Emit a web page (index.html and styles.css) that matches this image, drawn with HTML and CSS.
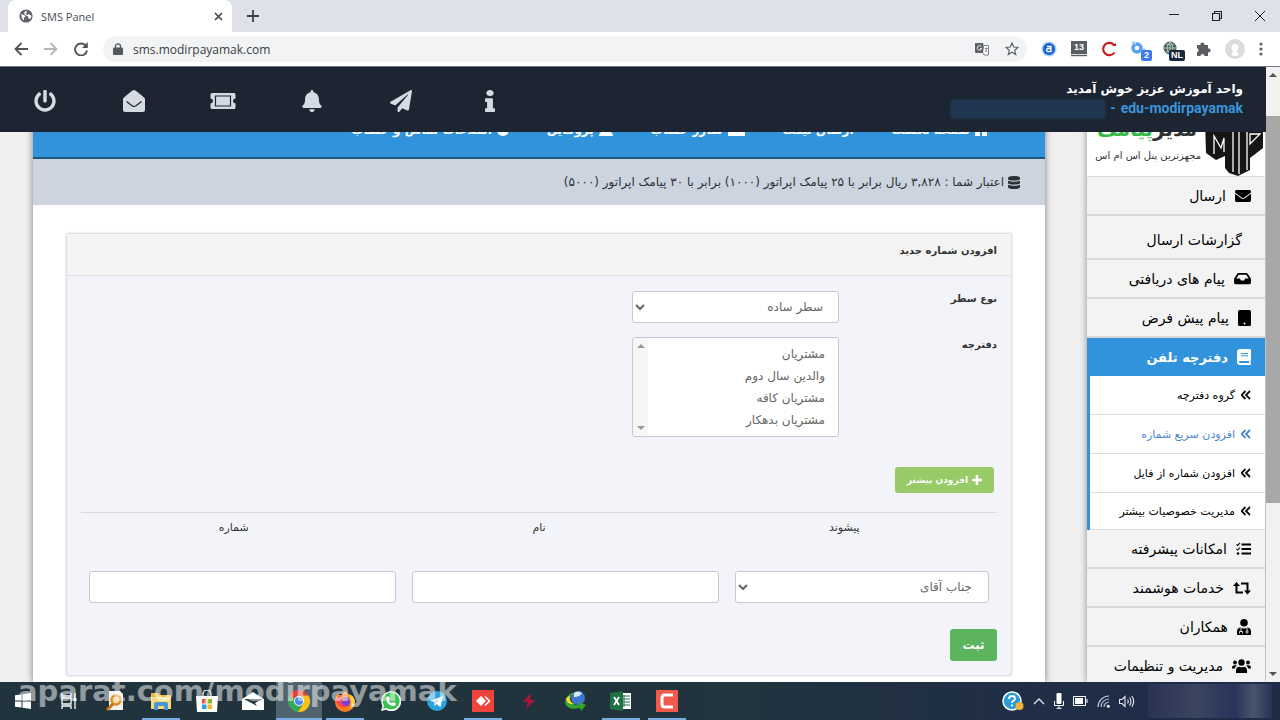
FILE: index.html
```html
<!DOCTYPE html>
<html lang="fa">
	<head>
		<meta charset="utf-8">
		<title>SMS Panel</title>
		<link rel="stylesheet" href="styles.css">
	</head>
	<body>
		<div class="tabs">
			<div class="tab">
				<svg width="14" height="14" viewBox="0 0 14 14"><circle cx="7" cy="7" r="6.6" fill="#5f6368"/><path d="M2 5l3 1 1.500 1.500L5 9v2.500L3 9.500zM7 1.500l1 2L6.500 5l2 1 1.500-1 2.500 2-1 3-2-.5-.5-2L6 6 5 4z" fill="#fff"/></svg>
				<span>SMS Panel</span>
				<button class="icon_btn" aria-label="Close tab"><svg width="9" height="9" viewBox="0 0 9 9"><path d="M1 1l7 7M8 1L1 8" stroke="#45494d" stroke-width="1.700"/></svg></button>
			</div>
			<button class="icon_btn new_tab" aria-label="New tab"><svg width="12" height="12" viewBox="0 0 12 12"><path d="M6 0v12M0 6h12" stroke="#3c4043" stroke-width="1.800"/></svg></button>
			<div class="win_btns">
				<button class="icon_btn" aria-label="Minimize"><svg width="10" height="10" viewBox="0 0 10 10"><path d="M0 3.500h10" stroke="#222"/></svg></button>
				<button class="icon_btn" aria-label="Restore"><svg width="10" height="10" viewBox="0 0 10 10"><path d="M.5 2.500h7v7h-7zM2.500 2.500v-2h7v7h-2" fill="none" stroke="#222" stroke-width="1.200"/></svg></button>
				<button class="icon_btn" aria-label="Close"><svg width="10" height="10" viewBox="0 0 10 10"><path d="M0 0l10 10M10 0L0 10" stroke="#222"/></svg></button>
			</div>
		</div>

		<div class="toolbar">
			<button class="icon_btn" aria-label="Back"><svg width="14" height="14" viewBox="0 0 14 14"><path d="M14 7H1.500M7.500 1l-6 6 6 6" fill="none" stroke="#505458" stroke-width="1.800"/></svg></button>
			<button class="icon_btn" aria-label="Forward"><svg width="14" height="14" viewBox="0 0 14 14"><path d="M0 7h12.500M6.500 1l6 6-6 6" fill="none" stroke="#b5b8bb" stroke-width="1.800"/></svg></button>
			<button class="icon_btn" aria-label="Reload"><svg width="14" height="14" viewBox="0 0 14 14"><path d="M12 4A6 6 0 1 0 13 8.500" fill="none" stroke="#505458" stroke-width="1.900"/><path d="M13.800 0v6H8z" fill="#505458"/></svg></button>
			<div class="omnibox">
				<svg width="10" height="12" viewBox="0 0 10 12"><path d="M1 4.500h8a1 1 0 0 1 1 1V11a1 1 0 0 1-1 1H1a1 1 0 0 1-1-1V5.500a1 1 0 0 1 1-1z" fill="#54585c"/><path d="M2.500 5V3a2.500 2.200 0 0 1 5 0v2" fill="none" stroke="#54585c" stroke-width="1.300"/></svg>
				<input type="text" aria-label="Address" value="sms.modirpayamak.com">
				<svg width="14" height="14" viewBox="0 0 14 14"><path d="M0 1h8l2.500 10H1a1 1 0 0 1-1-1z" fill="#5f6368"/><path d="M9 3.500h4.500V13H9L8 11" fill="#fff" stroke="#777" stroke-width=".9"/><path d="M6.300 4.500a2.200 2.200 0 1 0 .4 2H5" fill="none" stroke="#eee" stroke-width="1"/><path d="M9.800 6.500H13M11.500 5.500v1c0 2-1 3-1.500 3M10.500 8l2 2.500" fill="none" stroke="#777" stroke-width=".8"/></svg>
				<svg width="14" height="14" viewBox="0 0 14 14"><path d="M7 1l1.700 4 4.300.4-3.300 2.900 1 4.200L7 10.300l-3.700 2.200 1-4.200L1 5.400 5.300 5z" fill="none" stroke="#5f6368" stroke-width="1.200"/></svg>
			</div>
			<div class="exts">
				<svg width="16" height="16" viewBox="0 0 16 16"><circle cx="8" cy="8" r="7.500" fill="#a9cdf6"/><circle cx="8" cy="8" r="6" fill="#1763d2"/><path d="M6 5.500h4v5H7a1.500 1.500 0 0 1 0-3h3" fill="none" stroke="#fff" stroke-width="1.300"/></svg>
				<span class="cal">13</span>
				<svg width="16" height="16" viewBox="0 0 16 16"><path d="M13.500 4.500A6.200 6.200 0 1 0 13.500 11.500" fill="none" stroke="#c32222" stroke-width="2.200"/><path d="M11 5h4V2z" fill="#c32222"/></svg>
				<span class="ext"><svg width="18" height="16" viewBox="0 0 18 16"><circle cx="6" cy="7" r="4" fill="none" stroke="#58a0ec" stroke-width="3.500"/><path d="M1 1l4 2M11 8l4 1" stroke="#9ac8f5" stroke-width="2"/></svg><b class="badge">2</b></span>
				<span class="ext"><svg width="18" height="16" viewBox="0 0 18 16"><circle cx="7" cy="7" r="6.500" fill="#4c5e60"/><path d="M1 7h12M7 1v12M3 3q4 2 8 0M3 11q4-2 8 0M7 1Q1 7 7 13M7 1q6 6 0 12" fill="none" stroke="#a9c4a9"/></svg><b class="badge badge_nl">NL</b></span>
				<svg width="16" height="16" viewBox="0 0 16 16"><path d="M2 4h3.500a2 2 0 1 1 3.800 0H13v3.500a2 2 0 1 1 0 3.800V15H9.500a2 2 0 0 0-4 0H2v-3.800a2 2 0 0 0 0-3.900z" fill="#5a5e62"/></svg>
				<svg width="20" height="20" viewBox="0 0 20 20"><circle cx="10" cy="10" r="10" fill="#dcdcdc"/><path d="M6 15.500c1-2 2-1.500 2-3C6 10 6 5 10 5s4 5 2 7.500c0 1.500 1 1 2 3q-4 3-8 0z" fill="#fff"/></svg>
				<svg width="4" height="14" viewBox="0 0 4 14" fill="#5f6368"><circle cx="2" cy="2" r="1.600"/><circle cx="2" cy="7" r="1.600"/><circle cx="2" cy="12" r="1.600"/></svg>
			</div>
		</div>

		<div class="page">
			<div class="site" dir="rtl">
				<div class="header">
					<div class="welcome">
						<div>واحد آموزش عزیز خوش آمدید</div>
						<div class="user"><a href="#">edu-modirpayamak</a><span>-</span><i class="hidden_name"></i></div>
					</div>
					<div class="head_icons" dir="ltr">
						<a href="#" aria-label="خروج"><svg width="22" height="22" viewBox="0 0 512 512"><path d="M400 54.100c63 45 104 118.600 104 201.900 0 136.800-110.800 247.700-247.500 248C120 504.300 8.200 393 8 256.400 7.900 173.100 48.900 99.300 111.800 54.200c11.700-8.300 28-4.800 35 7.700L162.600 90c5.900 10.500 3.100 23.800-6.600 31-41.500 30.800-68 79.600-68 134.900-.1 92.300 74.500 168.100 168 168.100 91.600 0 168.600-74.200 168-169.100-.3-51.800-24.700-101.800-68.100-134-9.700-7.200-12.400-20.500-6.500-30.900l15.800-28.100c7-12.400 23.200-16.100 34.800-7.800zM296 264V24c0-13.300-10.700-24-24-24h-32c-13.300 0-24 10.700-24 24v240c0 13.300 10.700 24 24 24h32c13.300 0 24-10.700 24-24z"/></svg></a>
						<a href="#" aria-label="پیام ها"><svg width="24" height="22" viewBox="0 0 24 22"><path d="M1 8.500Q10 0 12 0t11 8.500V20a2 2 0 0 1-2 2H3a2 2 0 0 1-2-2z"/><path d="M4.500 11.500l5.500 4.300q2 1.300 4 0l5.500-4.300" fill="none" stroke="#1c2531" stroke-width="1.200"/></svg></a>
						<a href="#" aria-label="تیکت"><svg width="26" height="18" viewBox="0 0 26 18"><path d="M2 1h22a1.500 1.500 0 0 1 1.500 1.500V6.500a2.500 2.500 0 0 0 0 5V15.500A1.500 1.500 0 0 1 24 17H2a1.500 1.500 0 0 1-1.500-1.500V11.500a2.500 2.500 0 0 0 0-5V2.500A1.500 1.500 0 0 1 2 1z"/><path d="M5.500 4h15v10h-15z" fill="none" stroke="#1c2531" stroke-width="1.200"/></svg></a>
						<a href="#" aria-label="اعلان ها"><svg width="20" height="22" viewBox="0 0 448 512"><path d="M224 512c35.320 0 63.970-28.650 63.970-64H160.030c0 35.350 28.650 64 63.970 64zm215.390-149.710c-19.320-20.760-55.470-51.990-55.470-154.290 0-77.700-54.480-139.900-127.940-155.160V32c0-17.670-14.320-32-31.980-32s-31.980 14.330-31.980 32v20.840C118.560 68.100 64.080 130.300 64.080 208c0 102.300-36.150 133.530-55.470 154.290-6 6.450-8.660 14.160-8.610 21.710.11 16.400 12.980 32 32.100 32h383.800c19.120 0 32-15.600 32.100-32 .05-7.550-2.610-15.270-8.610-21.710z"/></svg></a>
						<a href="#" aria-label="ارسال"><svg width="22" height="22" viewBox="0 0 512 512"><path d="M476 3.200L12.500 270.600c-18.100 10.400-15.800 35.600 2.200 43.200L121 358.400l287.300-253.200c5.500-4.900 13.300 2.600 8.600 8.300L176 407v80.500c0 23.600 28.500 32.900 42.500 15.800L282 426l124.600 52.200c14.200 6 30.400-2.900 33-18.200l72-432C515 7.800 493.300-6.800 476 3.200z"/></svg></a>
						<a href="#" aria-label="راهنما"><svg width="10" height="22" viewBox="0 0 192 512" preserveAspectRatio="none"><path d="M20 424.229h20V279.771H20c-11.046 0-20-8.954-20-20V212c0-11.046 8.954-20 20-20h112c11.046 0 20 8.954 20 20v212.229h20c11.046 0 20 8.954 20 20V492c0 11.046-8.954 20-20 20H20c-11.046 0-20-8.954-20-20v-47.771c0-11.046 8.954-20 20-20zM96 0C56.235 0 24 32.235 24 72s32.235 72 72 72 72-32.235 72-72S135.764 0 96 0z"/></svg></a>
					</div>
				</div>

				<div class="content">
					<div class="side">
						<div class="logo">
							<svg width="58" height="78" viewBox="0 0 58 78"><path d="M0 22l28-18 30 18v28L45 60v12l-12 6-9-3-4-5V58l-9 4-10-7z" fill="#161414"/><path d="M28 30v44M34 30v46M42 30v42M45 36l0 10 10-10zM9 56V38l7 12 3-10v14" fill="none" stroke="#fff" stroke-width="1.300"/></svg>
							<div class="logo_text">
								<div class="logo_name">مدیر<span>پیامک</span></div>
								<div>مجهزترین پنل اس ام اس</div>
							</div>
						</div>
						<a class="item" href="#"><svg width="16" height="16" viewBox="0 0 512 512"><path d="M502.300 190.800c3.900-3.100 9.700-.2 9.700 4.700V400c0 26.500-21.500 48-48 48H48c-26.500 0-48-21.500-48-48V195.600c0-5 5.700-7.800 9.700-4.700 22.400 17.400 52.100 39.500 154.100 113.600 21.100 15.400 56.700 47.800 92.200 47.600 35.700.3 72-32.800 92.300-47.600 102-74.100 131.600-96.300 154-113.700zM256 320c23.200.4 56.600-29.200 73.400-41.400 132.700-96.300 142.800-104.700 173.400-128.700 5.800-4.500 9.200-11.500 9.200-18.900v-19c0-26.500-21.500-48-48-48H48c-26.500 0-48 21.500-48 48v19c0 7.400 3.400 14.300 9.200 18.900 30.600 23.900 40.700 32.400 173.400 128.700 16.800 12.200 50.200 41.800 73.400 41.400z"/></svg>ارسال</a>
						<a class="item item_plain" href="#">گزارشات ارسال</a>
						<a class="item" href="#"><svg width="17" height="15" viewBox="0 0 576 512"><path d="M567.938 243.908L462.250 85.374A48.003 48.003 0 0 0 422.311 64H153.689a48 48 0 0 0-39.938 21.374L8.062 243.908A47.994 47.994 0 0 0 0 270.533V400c0 26.510 21.490 48 48 48h480c26.510 0 48-21.490 48-48V270.533a47.994 47.994 0 0 0-8.062-26.625zM162.252 128h251.497l85.333 128H376l-32 64H232l-32-64H76.918l85.334-128z"/></svg>پیام های دریافتی</a>
						<a class="item" href="#"><svg width="13" height="16" viewBox="0 0 13 16"><path fill-rule="evenodd" d="M1.500 0h10A1.500 1.500 0 0 1 13 1.500v13a1.500 1.500 0 0 1-1.500 1.500h-10A1.500 1.500 0 0 1 0 14.500v-13A1.500 1.500 0 0 1 1.500 0zM6.500 12.500a1 1 0 1 0 0 2 1 1 0 0 0 0-2z"/></svg>پیام پیش فرض</a>
						<a class="item item_active" href="#"><svg width="14" height="16" viewBox="0 0 14 16"><path fill-rule="evenodd" d="M3 0h10.200a.8.8 0 0 1 .8.8v10.400a.8.800 0 0 1-.4.700v2.200a.8.8 0 0 1 .4.700v.4a.8.8 0 0 1-.8.800H3a3 3 0 0 1-3-3V3a3 3 0 0 1 3-3zM3 12a1 1 0 0 0 0 2h9v-2zM4 4v1h7V4zm0 2.200v1h7v-1z"/></svg>دفترچه تلفن</a>
						<div class="sub">
							<a href="#"><svg width="10" height="10" viewBox="0 0 10 10"><path d="M4.500 1l-4 4 4 4M9 1L5 5l4 4"/></svg>گروه دفترچه</a>
							<a href="#" class="on"><svg width="10" height="10" viewBox="0 0 10 10"><path d="M4.500 1l-4 4 4 4M9 1L5 5l4 4"/></svg>افزودن سریع شماره</a>
							<a href="#"><svg width="10" height="10" viewBox="0 0 10 10"><path d="M4.500 1l-4 4 4 4M9 1L5 5l4 4"/></svg>افزودن شماره از فایل</a>
							<a href="#"><svg width="10" height="10" viewBox="0 0 10 10"><path d="M4.500 1l-4 4 4 4M9 1L5 5l4 4"/></svg>مدیریت خصوصیات بیشتر</a>
						</div>
						<a class="item" href="#"><svg width="15" height="14" viewBox="0 0 15 14"><path d="M5.500 2.500H15M5.500 7H15M5.500 11.500H15" fill="none" stroke="#000" stroke-width="1.900"/><path d="M.5 2.300l1.200 1.200L4 .8M.5 6.800L1.700 8 4 5.500" fill="none" stroke="#000" stroke-width="1.100"/><circle cx="2" cy="11.500" r="1.300"/></svg>امکانات پیشرفته</a>
						<a class="item" href="#"><svg width="18" height="14" viewBox="0 0 18 14"><path d="M3.500 3v8.500H10M8 2.500h6.500V11" fill="none" stroke="#000" stroke-width="2"/><path d="M0 5l3.500-4L7 5zM11 9.500h7L14.500 13.500z"/></svg>خدمات هوشمند</a>
						<a class="item" href="#"><svg width="14" height="16" viewBox="0 0 14 16"><circle cx="7" cy="3.800" r="3.800"/><path d="M3.500 8.500Q7 10.500 10.500 8.500 14 9 14 12.500V15a1 1 0 0 1-1 1H1a1 1 0 0 1-1-1v-2.500Q0 9 3.500 8.500z"/><path d="M4 9v4M2.500 14.500v-2h3v2M10 9v3" fill="none" stroke="#f3f3f3" stroke-width=".9"/><circle cx="10" cy="13" r="1.100" fill="none" stroke="#f3f3f3" stroke-width=".9"/></svg>همکاران</a>
						<a class="item" href="#"><svg width="19" height="14" viewBox="0 0 19 14"><circle cx="9.500" cy="3.500" r="3.200"/><circle cx="3" cy="3.500" r="1.900"/><circle cx="16" cy="3.500" r="1.900"/><path d="M4 14v-2.500q0-3.500 3.500-3.800 2 1 4 0Q15 8 15 11.500V14zM0 9q0-2.800 2.500-2.800H5Q3 7.500 3 9.500H0zM19 9q0-2.800-2.500-2.800H14q2 1.300 2 3.300h3z"/></svg>مدیریت و تنظیمات</a>
					</div>

					<div class="main">
						<div class="nav">
							<a href="#"><svg width="12" height="12" viewBox="0 0 12 12"><path d="M0 0h5v5H0zM7 0h5v5H7zM0 7h5v5H0zM7 7h5v5H7z"/></svg>صفحه نخست</a>
							<a href="#">ارسال تیکت</a>
							<a href="#"><svg width="17" height="12" viewBox="0 0 17 12"><path d="M0 1h17v3H0zM0 6h17v6H0z"/></svg>شارژ حساب</a>
							<a href="#"><svg width="14" height="12" viewBox="0 0 14 12"><circle cx="7" cy="3" r="3"/><path d="M0 12q0-5 7-5t7 5z"/></svg>پروفایل</a>
							<a href="#"><svg width="12" height="12" viewBox="0 0 12 12"><circle cx="6" cy="6" r="6"/></svg>اطلاعات تماس و حساب</a>
						</div>
						<div class="credit"><svg width="12" height="13" viewBox="0 0 12 13"><path d="M0 2q0-2 6-2t6 2v1q0 1.500-6 1.500T0 3zM0 4.700q2 1 6 1t6-1V7q0 1.500-6 1.500T0 7zM0 8.800q2 1 6 1t6-1V11q0 2-6 2t-6-2z"/></svg>اعتبار شما : ۳,۸۲۸ ریال برابر با ۲۵ پیامک اپراتور (۱۰۰۰) برابر با ۳۰ پیامک اپراتور (۵۰۰۰)</div>

						<form class="panel">
							<div class="panel_head">افزودن شماره جدید</div>
							<div class="panel_body">
								<div class="row">
									<label for="row_type">نوع سطر</label>
									<select class="field" id="row_type" name="row_type"><option>سطر ساده</option></select>
								</div>
								<div class="row">
									<label for="book">دفترچه</label>
									<div class="field list">
										<select id="book" name="book" multiple size="4">
											<option>مشتریان</option>
											<option>والدین سال دوم</option>
											<option>مشتریان کافه</option>
											<option>مشتریان بدهکار</option>
										</select>
										<div class="list_bar"><i class="up"></i><i class="down"></i></div>
									</div>
								</div>
								<button type="button" class="more"><svg width="10" height="10" viewBox="0 0 10 10"><path d="M5 0v10M0 5h10" stroke="#fff" stroke-width="2.600"/></svg>افزودن بیشتر</button>
								<div class="titles">
									<label for="prefix">پیشوند</label>
									<label for="name">نام</label>
									<label for="number">شماره</label>
								</div>
								<div class="inputs">
									<select class="field" id="prefix" name="prefix"><option>جناب آقای</option></select>
									<input class="field" type="text" id="name" name="name">
									<input class="field" type="text" id="number" name="number">
								</div>
								<button type="button" class="save">ثبت</button>
							</div>
						</form>
					</div>
				</div>
			</div>
			<div class="scroll"><i class="up"></i><div class="track"><div class="thumb"></div></div><i class="down"></i></div>
		</div>

		<div class="taskbar">
			<div class="app"><svg width="16" height="16" viewBox="0 0 16 16"><path d="M0 2.300L6.500 1.400v6.100H0zM7.500 1.200L16 0v7.500H7.500zM0 8.500h6.500v6.100L0 13.700zM7.500 8.500H16V16l-8.500-1.200z" fill="#fff"/></svg></div>
			<div class="app"><svg width="18" height="16" viewBox="0 0 18 16"><path d="M2 0v3h9V0M2 16v-3h9v3M2 5h9v6H2zM15 0v16" fill="none" stroke="#fff" stroke-width="1.300"/><path d="M13.500 5h3v3h-3z" fill="#fff"/></svg></div>
			<div class="app"><svg width="20" height="22" viewBox="0 0 20 22"><path d="M4 1h11l3 3v16H4z" fill="#f3f1ee"/><circle cx="11" cy="10" r="4.500" fill="#fbe0a8" stroke="#e08a1e" stroke-width="2.500"/><path d="M8 14l-6 6" stroke="#c77413" stroke-width="3"/></svg></div>
			<div class="app open"><svg width="22" height="20" viewBox="0 0 22 20"><path d="M1 2h7l2 2h11v14H1z" fill="#e9b83d"/><path d="M1 6h20v12H1z" fill="#fadb7c"/><path d="M4 19v-6q0-2 2-2h10q2 0 2 2v6h-4v-4H8v4z" fill="#4a95d4"/></svg></div>
			<div class="app"><svg width="22" height="22" viewBox="0 0 22 22"><path d="M7 6V4a4 4 0 0 1 8 0v2" fill="none" stroke="#ddd" stroke-width="1.500"/><path d="M0 6h22l-1 16H1z" fill="#fff"/><path d="M6 9h4.500v4.500H6z" fill="#e8502e"/><path d="M11.500 9H16v4.500h-4.500z" fill="#7fb92c"/><path d="M6 14.500h4.500V19H6z" fill="#2aa0e6"/><path d="M11.500 14.500H16V19h-4.500z" fill="#f5b921"/></svg></div>
			<div class="app"><svg width="24" height="20" viewBox="0 0 24 20"><path d="M1 8l11-7 11 7v11H1z" fill="#fff"/><path d="M3 8h18l-7 4 2 3z" fill="#24343f"/></svg></div>
			<div class="app open current"><svg width="22" height="22" viewBox="0 0 22 22"><path d="M11 11L1.500 5.500A11 11 0 0 1 20.500 5.500H11z" fill="#e34133"/><path d="M1.500 5.500A11 11 0 0 0 10 22l5.500-8.500L11 11z" fill="#3aa757"/><path d="M20.500 5.500A11 11 0 0 1 10 22l5.500-8.500L14 5.500z" fill="#fbc116"/><circle cx="11" cy="11" r="5" fill="#fff"/><circle cx="11" cy="11" r="4" fill="#4a86f0"/></svg></div>
			<div class="app open"><svg width="22" height="22" viewBox="0 0 22 22"><path d="M11 1q2 1 3 3 6 1 7 8a10 10 0 0 1-20 0Q1 7 4 3l1 2 3 0q0-3 3-4z" fill="#ff7a24"/><path d="M14 4q6 1 7 8-1 5-5 7 3-7-2-15z" fill="#ffd23e"/><circle cx="11" cy="12" r="5" fill="#7542d8"/><path d="M2 8q2-2 5 0l4 1q-1 3-4 3 1 4 6 3-3 4-8 1-3-3-3-8z" fill="#ff4550"/></svg></div>
			<div class="app"><svg width="20" height="20" viewBox="0 0 20 20"><path d="M0 20l1.500-5A10 10 0 1 1 5 18.700z" fill="#fff"/><path d="M2 18l1-3.500A8.500 8.500 0 1 1 5.500 17z" fill="#38c252"/><path d="M6 5.500l2 0 1 2.500-1 1.500q1 2 3 2.500l1.500-1 2.500 1.500q0 2.500-3 2.500Q6 14 5 8q0-2 1-2.500z" fill="#fff"/></svg></div>
			<div class="app"><svg width="20" height="20" viewBox="0 0 20 20"><circle cx="10" cy="10" r="10" fill="#2ca3dc"/><path d="M3.500 10L16 5l-2.500 11-4-3-2 2-.5-4z" fill="#fff"/><path d="M7 11l6.500-4-4.500 5-1.500 3z" fill="#b8d7ea"/></svg></div>
			<div class="app open"><svg width="22" height="22" viewBox="0 0 22 22"><path d="M0 0h22v22H0z" fill="#ef443b"/><path d="M9 6l5 5-5 5-5-5z" fill="#fff"/><path d="M13 6.500l4.500 4.500-4.500 4.500" fill="none" stroke="#fff" stroke-width="1.500"/></svg></div>
			<div class="app"><svg width="14" height="16" viewBox="0 0 14 16"><path d="M9 0L1 9h5l-2 7 9-9H8z" fill="#b01338"/></svg></div>
			<div class="app"><svg width="22" height="20" viewBox="0 0 22 20"><circle cx="14" cy="7" r="7" fill="#3e76d0"/><path d="M10 2q4-3 8 0-2 4-8 4z" fill="#dbe8fb"/><path d="M2 7q5-6 8-5-5 4-4 8 4 5 9 4l0-3 7 3-5 6-1-3Q4 20 1 12z" fill="#35a52c"/><path d="M2 8q2-3 4-3-1 6 4 8-7 1-8-5z" fill="#f4dc35"/></svg></div>
			<div class="app open"><svg width="22" height="20" viewBox="0 0 22 20"><path d="M10 2h11v16H10z" fill="#fff"/><path d="M14 4v12M12 5h8M12 8h8M12 11h8M12 14h8" stroke="#217346"/><path d="M0 2l13-2v20L0 18z" fill="#1f7244"/><path d="M4 6l5 8M9 6l-5 8" stroke="#fff" stroke-width="1.800"/></svg></div>
			<div class="app open"><svg width="22" height="22" viewBox="0 0 22 22"><path d="M0 0h22v22H0z" fill="#f2594b"/><path d="M17 5H9Q6 5 6 8v6q0 3 3 3h8" fill="none" stroke="#fff" stroke-width="3"/></svg></div>
			<div class="tray">
				<svg width="22" height="20" viewBox="0 0 22 20"><circle cx="10" cy="10" r="9" fill="#2b9bd8" stroke="#fff" stroke-width="1.500"/><path d="M7 8q0-3 3-3t3 2.500q0 1.500-1.500 2.300-1.500.7-1.500 2.200M10 13.500v2" fill="none" stroke="#fff" stroke-width="1.800"/><circle cx="17.500" cy="15" r="4" fill="#f2b237"/></svg>
				<svg width="12" height="8" viewBox="0 0 12 8"><path d="M1 7l5-5 5 5" fill="none" stroke="#dfe4ea" stroke-width="1.300"/></svg>
				<svg width="10" height="16" viewBox="0 0 10 16"><rect x="2.500" width="5" height="11" rx="1" fill="#fff"/><path d="M.5 8v4.500h9V8M5 12.500V15M2.500 15.300h5" fill="none" stroke="#fff"/></svg>
				<svg width="15" height="10" viewBox="0 0 15 10"><path d="M.5.5h12v9H.5zM14 3v4" fill="none" stroke="#fff"/><path d="M2 2h8v6H2z" fill="#fff"/></svg>
				<svg width="13" height="13" viewBox="0 0 13 13"><path d="M1 12A11 11 0 0 1 12 1M4 12a8 8 0 0 1 8-8M7 12a5 5 0 0 1 5-5" fill="none" stroke="#b6bfca" stroke-width="1.200"/><circle cx="11.300" cy="11.300" r="1.500" fill="#fff"/></svg>
				<svg width="16" height="13" viewBox="0 0 16 13"><path d="M.5 4.500H3l3-3v10l-3-3H.500zM8.500 4.500q1.500 2 0 4M10.500 2.500q3 4 0 8M12.700 1q4 5.500 0 11" fill="none" stroke="#e7ebf0" stroke-width="1.100"/></svg>
			</div>
			<div class="clock"></div>
			<div class="watermark">aparat.com/modirpayamak</div>
		</div>
	</body>
</html>
```
FILE: styles.css
```css
*{margin:0px;padding:0px;box-sizing:border-box;}
body{height:100vh;display:flex;flex-direction:column;overflow:hidden;font-family:"DejaVu Sans",sans-serif;font-size:12px;color:#333;}
a{text-decoration:none;color:inherit;}
svg{display:block;flex:none;}
button{cursor:pointer;font-family:inherit;}
.icon_btn{border:0;background:none;display:flex;align-items:center;justify-content:center;width:16px;height:16px;}

/* browser */
.tabs{height:32px;flex:none;display:flex;align-items:center;background:#dee1e9;padding-left:8px;}
.tab{width:224px;height:32px;background:#fff;border-radius:8px 8px 0 0;display:flex;align-items:center;padding:0 6px 0 11px;font-family:"Open Sans",sans-serif;font-size:11px;color:#4a4d51;}
.tab span{flex:1;padding-left:8px;}
.new_tab{margin-left:13px;}
.win_btns{margin-left:auto;display:flex;gap:27px;padding-right:12px;}
.toolbar{height:34px;flex:none;display:flex;align-items:center;background:#fff;padding-left:13px;gap:14px;}
.omnibox{flex:1;height:26px;border-radius:13px;background:#f1f3f4;display:flex;align-items:center;gap:16px;padding:0 8px 0 10px;}
.omnibox input{flex:1;border:0;background:none;outline:0;margin-left:-6px;font-family:"Open Sans",sans-serif;font-size:12px;color:#3c4043;}
.exts{display:flex;align-items:center;gap:14px;padding-right:17px;}
.cal{width:16px;height:16px;background:#5a5f62;border-bottom:3px double #ddd;color:#fff;font:bold 9px/12px "Liberation Sans",sans-serif;text-align:center;}
.ext{position:relative;}
.badge{position:absolute;left:10px;top:9px;min-width:11px;height:11px;padding:0 2px;border-radius:2px;background:#3f7bee;color:#fff;font:bold 9px/11px "Liberation Sans",sans-serif;text-align:center;}
.badge_nl{left:6px;background:#17283f;}

.page{flex:1;min-height:0;display:flex;border-top:1px solid #6f7880;}
.scroll{width:14px;background:#f1f1f1;display:flex;flex-direction:column;align-items:center;padding:6px 0;}
.track{flex:1;width:100%;padding:39px 0 169px;}
.thumb{height:100%;background:#a8a8a8;}
.up,.down{border:4px solid transparent;width:0;height:0;}
.up{border-top:0;border-bottom-color:#555;}
.down{border-bottom:0;border-top-color:#555;}

/* header */
.site{flex:1;display:flex;flex-direction:column;overflow:hidden;background:#f0f0f0;}
.header{position:relative;z-index:2;height:65px;flex:none;background:#1c2531;display:flex;justify-content:space-between;padding-right:23px;}
.welcome{color:#fff;font-weight:bold;font-size:12px;line-height:19px;padding-top:13px;}
.user{display:flex;align-items:center;gap:5px;color:#3a94dc;font-family:Roboto,sans-serif;font-size:14px;}
.hidden_name{width:154px;height:18px;background:#203650;box-shadow:0 0 4px #203650;}
.head_icons{display:flex;}
.head_icons a{width:89px;display:flex;align-items:center;justify-content:center;padding-top:3px;}
.head_icons svg{fill:#d5dae3;}

/* the content is scrolled a little below the header */
.content{flex:1;display:flex;gap:42px;margin-top:-34px;padding:0 1px 0 33px;min-height:0;}
.side{width:178px;flex:none;background:#f3f3f3;box-shadow:0 0 7px #888;color:#000;}
.logo{height:79px;background:#fff;border-bottom:1px solid #ddd;display:flex;padding-right:2px;gap:4px;}
.logo_text{flex:1;font-size:10px;line-height:20px;color:#333;white-space:nowrap;}
.logo_name{font-size:20px;line-height:24px;font-weight:bold;padding:19px 4px 5px 0;}
.logo_name span{color:#35b844;}
.item{height:39px;display:flex;align-items:center;gap:9px;padding-right:14px;border-bottom:2px solid #d9d9d9;font-size:14px;}
.item_plain{height:44px;padding-right:23px;padding-top:6px;}
.item_active{background:#3193db;border:0;height:38px;color:#fff;fill:#fff;font-weight:bold;font-size:13px;}
.sub{background:#fff;border-left:3px solid #3193db;font-size:11px;}
.sub a{height:39px;display:flex;align-items:center;gap:6px;padding-right:14px;border-bottom:1px solid #ddd;}
.sub a:last-child{height:37px;}
.sub svg{fill:none;stroke:#111;stroke-width:1.800;}
.sub .on{color:#4a86cc;}
.sub .on svg{stroke:#4a86cc;}

/* main */
.main{flex:1;background:#fff;box-shadow:0 0 7px #777;}
.nav{height:61px;background:#3193db;border-bottom:2px solid #1f587f;display:flex;gap:38px;padding-right:58px;color:#fff;fill:#fff;font-weight:bold;font-size:12px;}
.nav a{display:flex;align-items:center;gap:5px;height:59px;padding-top:4px;}
.credit{height:46px;background:#cbd4df;display:flex;align-items:center;gap:4px;padding-right:25px;color:#2d3136;fill:#2d3136;font-size:12px;}
.panel{margin:28px 33px 0;border:1px solid #dedfe4;border-radius:3px;background:#f3f4fa;box-shadow:0 0 2px #ccc;}
.panel_head{height:42px;line-height:34px;padding:0 14px;background:#f4f4f4;border-bottom:1px solid #dedfe4;font-size:10px;font-weight:bold;}
.panel_body{padding:15px 14px 14px;}
.row{display:flex;margin-bottom:14px;}
.row label{width:158px;font-weight:bold;font-size:10px;line-height:16px;}
.row .field{width:207px;}
.field{border:1px solid #c6c8d4;border-radius:3px;background:#fff;height:32px;color:#666;font-family:inherit;font-size:12px;padding:0 11px;outline:0;}
.row .list{height:100px;display:flex;padding:0;overflow:hidden;}
.list select{flex:1;border:0;outline:0;background:none;height:98px;padding:5px 11px;overflow:hidden;font-family:inherit;font-size:12px;color:#666;}
.list option{padding:4px 2px;line-height:14px;min-height:22px;}
.list_bar{width:15px;background:#f0f0f0;display:flex;flex-direction:column;justify-content:space-between;align-items:center;padding:6px 0;opacity:.6;}
.more{display:flex;align-items:center;gap:4px;height:26px;margin:30px 3px 19px;padding:0 12px;border:0;border-radius:3px;background:#98cb68;color:#fff;font-weight:bold;font-size:9px;}
.titles{display:grid;grid-template-columns:1fr 1fr 1fr;border-top:1px solid #dadbe2;height:59px;text-align:center;font-size:11px;line-height:30px;}
.inputs{display:grid;grid-template-columns:254fr 307fr 307fr;gap:16px;padding:0 8px;}
.inputs .field{width:100%;min-width:0;padding:0 12px;}
.save{display:block;width:47px;height:32px;margin-top:26px;border:0;border-radius:3px;background:#5cb45e;color:#fff;font-weight:bold;font-size:12px;}

/* taskbar */
.taskbar{position:relative;z-index:3;height:38px;flex:none;display:flex;background:linear-gradient(90deg,#21343e 55%,#1f2c48 90%);}
.app{width:46px;display:flex;align-items:center;justify-content:center;}
.open{background:linear-gradient(#77ade3,#77ade3) bottom/38px 2px no-repeat;}
.current{background-color:#50636e;background-size:46px 2px;}
.tray{margin-left:auto;display:flex;align-items:center;gap:9px;padding-right:13px;}
.clock{width:124px;margin:2px 8px 2px 0;background:linear-gradient(90deg,#2a3353,#3b4560 40%,#27335a 70%,#4a546c 85%,#27335a);}
.watermark{position:absolute;left:18px;bottom:13px;font-size:29px;line-height:32px;font-weight:bold;color:#fff;opacity:.5;white-space:nowrap;}
```
